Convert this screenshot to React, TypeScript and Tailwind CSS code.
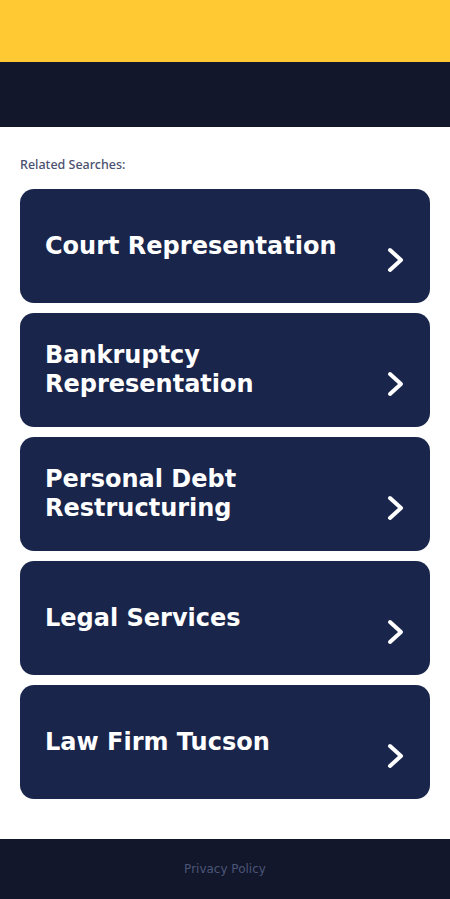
import React from 'react';

const searches = [
  'Court Representation',
  'Bankruptcy Representation',
  'Personal Debt Restructuring',
  'Legal Services',
  'Law Firm Tucson',
];

const Chevron = () => (
  <svg width="18" height="26" viewBox="0 0 18 26" fill="none" className="shrink-0">
    <polyline
      points="3,3 14,13 3,23"
      stroke="white"
      strokeWidth="4"
      strokeLinecap="round"
      strokeLinejoin="round"
    />
  </svg>
);

const App = () => {
  return (
    <div className="min-h-[899px] flex flex-col bg-white">
      <div className="h-[62px] bg-[#ffc933]" />
      <div className="h-[65px] bg-[#12172b]" />

      <main className="flex-1 px-5 pt-[29px] pb-10">
        <p className="text-[12.5px] leading-[17px] font-medium text-[#4b5170] mb-[16px] font-['Noto_Sans',sans-serif]">
          Related Searches:
        </p>
        <div className="flex flex-col gap-[10px]">
          {searches.map((s) => (
            <a
              key={s}
              href="#"
              className="h-[114px] rounded-[14px] bg-[#19254b] flex items-center pl-[25px] pr-[25px]"
            >
              <span className="flex-1 pr-6 text-white font-bold text-[24px] leading-[29px] font-['DejaVu_Sans',sans-serif]">
                {s}
              </span>
              <span className="mt-7">
                <Chevron />
              </span>
            </a>
          ))}
        </div>
      </main>

      <footer className="h-[60px] bg-[#12172b] flex items-center justify-center">
        <a href="#" className="text-[12px] text-[#4b5576] font-['DejaVu_Sans',sans-serif]">
          Privacy Policy
        </a>
      </footer>
    </div>
  );
};

export default App;
